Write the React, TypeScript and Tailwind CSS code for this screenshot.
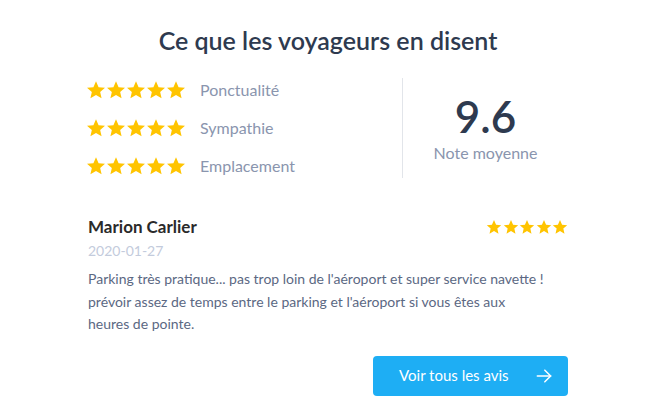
import React from "react";

const Star = ({ size = 18 }: { size?: number }) => (
  <svg width={size} height={size} viewBox="0 0 24 24" className="shrink-0">
    <polygon
      points="12,1.5 15.1,8.6 22.8,9.3 17,14.4 18.7,22 12,18 5.3,22 7,14.4 1.2,9.3 8.9,8.6"
      fill="#ffc400"
    />
  </svg>
);

const Stars = ({ size, gap }: { size: number; gap: string }) => (
  <div className={`flex items-center ${gap}`}>
    {[0, 1, 2, 3, 4].map((i) => (
      <Star key={i} size={size} />
    ))}
  </div>
);

const criteria = ["Ponctualité", "Sympathie", "Emplacement"];

export default function App() {
  return (
    <div
      className="w-[648px] h-[414px] bg-white"
      style={{ fontFamily: 'Lato, "Noto Sans", sans-serif' }}
    >
      <div className="w-[480px] ml-[88px] pt-[24px]">
        <h2 className="text-center text-[25px] leading-[32px] font-semibold text-[#2e3a4f]">
          Ce que les voyageurs en disent
        </h2>

        <div className="flex mt-[22px]">
          <div className="flex-1 flex flex-col gap-[18px] pt-[2px] -ml-[2px]">
            {criteria.map((c) => (
              <div key={c} className="flex items-center h-[20px]">
                <Stars size={20} gap="gap-[0px]" />
                <span className="ml-[14px] text-[16px] text-[#8a95ae]">{c}</span>
              </div>
            ))}
          </div>
          <div className="w-[166px] h-[100px] border-l border-[#e2e5ea] flex flex-col items-center pt-[14px]">
            <div className="text-[44px] leading-[48px] font-semibold text-[#2e3a4f]">9.6</div>
            <div className="text-[16px] leading-[22px] mt-[2px] text-[#8a95ae]">Note moyenne</div>
          </div>
        </div>

        <div className="mt-[38px] flex items-start justify-between">
          <div>
            <div className="text-[17px] leading-[22px] font-bold text-[#2a2a2a]">Marion Carlier</div>
            <div className="text-[14px] leading-[20px] mt-[3px] text-[#c3cbdc]">2020-01-27</div>
          </div>
          <div className="pt-[3px]">
            <Stars size={16} gap="gap-[0.5px]" />
          </div>
        </div>

        <p className="mt-[7px] w-[461px] text-[14px] leading-[22.5px] text-[#5b6883]">
          Parking très pratique... pas trop loin de l'aéroport et super service navette !
          prévoir assez de temps entre le parking et l'aéroport si vous êtes aux heures de
          pointe.
        </p>

        <div className="flex justify-end mt-[20px]">
          <button className="w-[195px] h-[40px] rounded-[4px] bg-[#1eaef4] flex items-center justify-between pl-[26px] pr-[14px] text-white text-[15px]">
            <span>Voir tous les avis</span>
            <svg width="20" height="20" viewBox="0 0 24 24" fill="none" stroke="white" strokeWidth="1.8" strokeLinecap="round" strokeLinejoin="round">
              <path d="M4 12h16" />
              <path d="M13 5l7 7-7 7" />
            </svg>
          </button>
        </div>
      </div>
    </div>
  );
}
